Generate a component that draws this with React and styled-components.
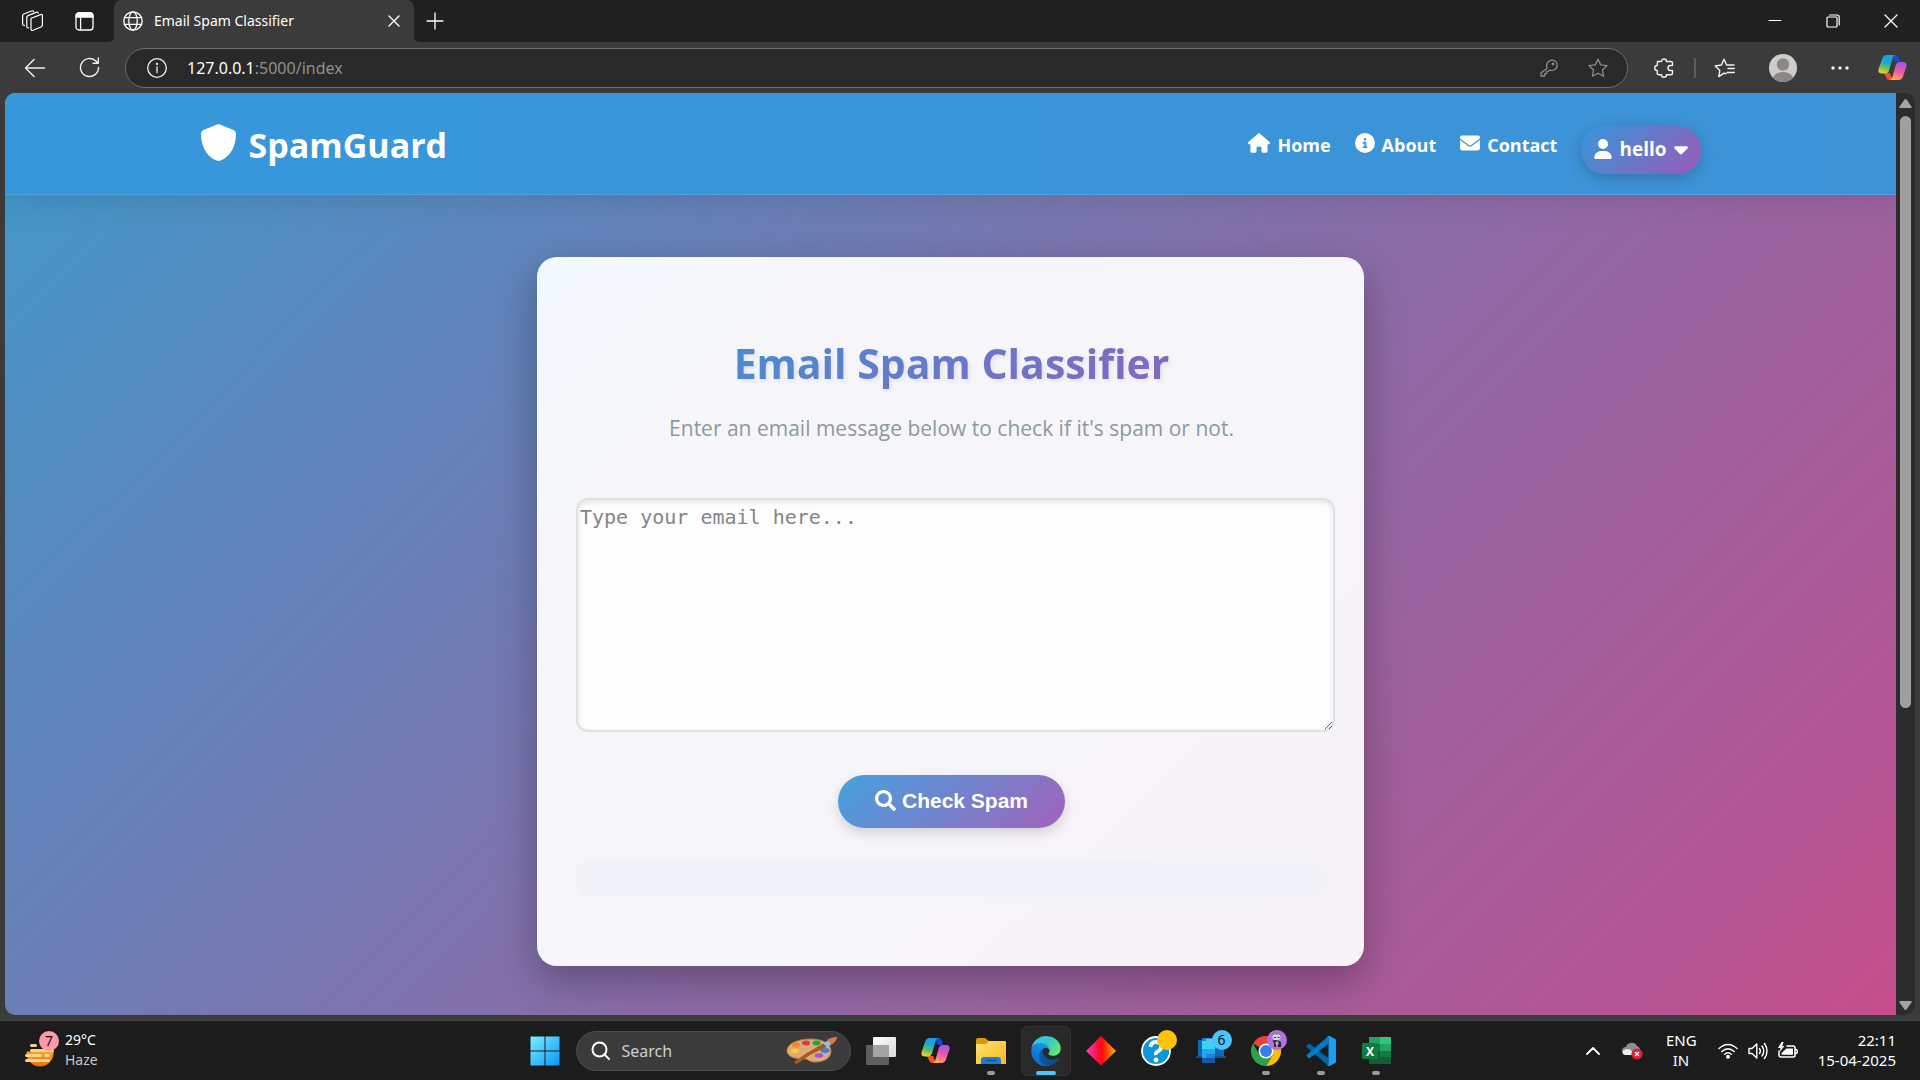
import React from "react";
import styled, { createGlobalStyle } from "styled-components";
import { FaHouse, FaCircleInfo, FaEnvelope, FaUser, FaCaretDown } from "react-icons/fa6";
import { FaSearch } from "react-icons/fa";

const GlobalStyle = createGlobalStyle`
  *, *::before, *::after { box-sizing: border-box; }
  body { margin: 0; background: #3b3b3b; font-family: "Open Sans", "Noto Sans", sans-serif; }
  button { font: inherit; color: inherit; background: none; border: 0; padding: 0; cursor: pointer; }
  svg { display: block; flex: none; }
`;

const ui = `"Noto Sans", "Open Sans", sans-serif`;

const Screen = styled.div`
  display: flex;
  flex-direction: column;
  height: 100vh;
  background: #3b3b3b;
  overflow: hidden;
`;

/* ---------- browser chrome ---------- */

const TabStrip = styled.div`
  display: flex;
  height: 42px;
  flex: none;
  color: #fff;
`;

const StripStart = styled.div`
  display: flex;
  align-items: center;
  gap: 30px;
  width: 114px;
  padding-left: 21px;
  background: #202020;
  border-bottom-right-radius: 5px;
`;

const TabSlot = styled.div`
  width: 300px;
  background: linear-gradient(#202020 50%, #3b3b3b 50%);
`;

const Tab = styled.div`
  display: flex;
  align-items: center;
  height: 100%;
  gap: 11px;
  padding: 0 14px 0 9px;
  border-radius: 8px 8px 0 0;
  background: #3b3b3b;
`;

const TabTitle = styled.span`
  flex: 1;
  font: 14px/20px ${ui};
`;

const StripEnd = styled.div`
  display: flex;
  align-items: center;
  justify-content: space-between;
  flex: 1;
  padding: 0 22px 0 12px;
  background: #202020;
  border-bottom-left-radius: 5px;
`;

const WindowButtons = styled.div`
  display: flex;
  gap: 44px;
`;

const IconButton = styled.button`
  display: flex;
  align-items: center;
  justify-content: center;
`;

const Toolbar = styled.div`
  display: flex;
  align-items: center;
  height: 51px;
  flex: none;
  padding: 0 13px 0 24px;
  color: #f0f0f0;
`;

const NavButtons = styled.div`
  display: flex;
  gap: 34px;
  width: 101px;
`;

const AddressBar = styled.div`
  display: flex;
  align-items: center;
  flex: 1;
  height: 40px;
  padding: 0 19px 0 21px;
  border: 1px solid #6a6a6a;
  border-radius: 20px;
  background: #292929;
`;

const Address = styled.div`
  flex: 1;
  padding-left: 20px;
  font: 16px/24px ${ui};
  color: #8f8f8f;
  b { font-weight: 400; color: #fff; }
`;

const AddressActions = styled.div`
  display: flex;
  align-items: center;
  gap: 30px;
  color: #8c8c8c;
`;

const ToolActions = styled.div`
  display: flex;
  align-items: center;
  padding-left: 26px;
`;

const ToolButton = styled(IconButton)`
  margin-left: ${(p) => p.$gap || 0}px;
`;

const Divider = styled.span`
  width: 2px;
  height: 20px;
  margin-left: 20px;
  background: #5c5c5c;
`;

/* ---------- web page ---------- */

const Viewport = styled.div`
  display: flex;
  flex: 1;
  min-height: 0;
  margin: 0 5px 5px;
  border-radius: 10px;
  overflow: hidden;
  background: #2c2c2c;
`;

const Page = styled.div`
  flex: 1;
  overflow: hidden;
  background: linear-gradient(135deg, #4099cb 0%, #6780b8 30%, #8a6da8 54%, #a15f9c 74%, #b65593 91%, #c64f8a 100%);
`;

const Scrollbar = styled.div`
  display: flex;
  flex-direction: column;
  align-items: center;
  width: 19px;
  padding: 6px 0 5px;
`;

const ScrollTrack = styled.div`
  flex: 1;
  width: 11px;
  margin: 8px 0;
`;

const ScrollThumb = styled.div`
  height: calc(100% * 27 / 40);
  border-radius: 6px;
  background: #9f9f9f;
`;

const Header = styled.header`
  height: 102px;
  border-bottom: 1px solid #519fdb;
  background: linear-gradient(90deg, #3797db, #3e93d7);
  box-shadow: 0 4px 30px rgba(0, 0, 0, 0.12);
`;

const HeaderInner = styled.div`
  display: flex;
  align-items: center;
  justify-content: space-between;
  max-width: 1500px;
  height: 100%;
  margin: 0 auto;
  padding-top: 2px;
  color: #fff;
`;

const Brand = styled.a`
  display: flex;
  align-items: center;
  gap: 13px;
  color: #fff;
  text-decoration: none;
  font-size: 34px;
  line-height: 48px;
  font-weight: 700;
  svg { margin-bottom: 4px; }
`;

const Nav = styled.nav`
  display: flex;
  align-items: center;
  gap: 24px;
`;

const NavLink = styled.a`
  display: flex;
  align-items: center;
  gap: 7px;
  color: #fff;
  text-decoration: none;
  font: 700 18px/28px "Open Sans", sans-serif;
  svg { margin-bottom: 4px; }
`;

const UserMenu = styled.button`
  display: flex;
  align-items: center;
  gap: 7px;
  height: 48px;
  margin-top: 10px;
  padding: 0 13px 2px;
  border-radius: 24px;
  background: linear-gradient(135deg, #3498db, #9b59b6);
  box-shadow: 0 4px 15px rgba(0, 0, 0, 0.2);
  font: 700 19px/28px "Open Sans", sans-serif;
  svg:first-child { width: 18px; }
  svg:last-child { width: 14px; }
`;

const Main = styled.main`
  padding-top: 62px;
`;

const Card = styled.section`
  display: flex;
  flex-direction: column;
  align-items: center;
  width: 827px;
  max-width: 100%;
  margin: 0 auto;
  padding: 76px 37px 69px 39px;
  border-radius: 20px;
  background: linear-gradient(135deg, #f2f8fc, #f5f6fa 18%, #f6f5fa 65%, #f7f2f7);
  box-shadow: 0 15px 40px rgba(0, 0, 0, 0.3);
`;

const Title = styled.h1`
  width: 100%;
  margin: 0;
  text-align: center;
  font-size: 41px;
  line-height: 60px;
  font-weight: 700;
  color: transparent;
  background: linear-gradient(135deg, #3498db, #9b59b6);
  -webkit-background-clip: text;
  background-clip: text;
  filter: drop-shadow(2px 2px 2px rgba(0, 0, 0, 0.08));
`;

const Lead = styled.p`
  margin: 19px 0 54px;
  font-size: 21px;
  line-height: 32px;
  color: #8d9a9b;
`;

const Form = styled.form`
  display: flex;
  flex-direction: column;
  align-items: center;
  width: 100%;
`;

const Message = styled.textarea`
  box-sizing: content-box;
  align-self: flex-start;
  width: 100%;
  height: 226px;
  padding: 2px;
  border: 2px solid #e0e0e0;
  border-radius: 12px;
  outline: none;
  resize: both;
  background: #fdfdfd;
  box-shadow: inset 0 2px 5px rgba(0, 0, 0, 0.1);
  font: 20px/30px "DejaVu Sans Mono", monospace;
  color: #333;
  &::placeholder { color: #858585; }
`;

const Submit = styled.button`
  display: flex;
  align-items: center;
  justify-content: center;
  gap: 6px;
  height: 53px;
  margin: 43px 0 31px;
  padding: 0 37px 2px;
  border-radius: 27px;
  color: #fff;
  background: linear-gradient(135deg, #45a1de, #a163bb);
  box-shadow: 0 5px 12px rgba(0, 0, 0, 0.15);
  font: 700 21px/24px "Liberation Sans", sans-serif;
`;

const Result = styled.div`
  width: 100%;
  height: 38px;
  border-radius: 12px;
  background: #f2f3f8;
`;

/* ---------- taskbar ---------- */

const Taskbar = styled.footer`
  display: grid;
  grid-template-columns: 1fr auto 1fr;
  align-items: center;
  height: 60px;
  flex: none;
  border-top: 1px solid #454545;
  background: #1c1c1c;
  color: #fff;
  font: 14px/20px ${ui};
`;

const Weather = styled.button`
  display: flex;
  align-items: center;
  gap: 4px;
  padding: 0 0 2px 25px;
  text-align: left;
  small { display: block; font-size: 14px; color: #c8c8c8; }
`;

const Apps = styled.div`
  display: flex;
  align-items: center;
  gap: 5px;
`;

const AppButton = styled.button`
  display: flex;
  flex-direction: column;
  align-items: center;
  justify-content: center;
  position: relative;
  width: 50px;
  height: 50px;
  border-radius: 6px;
  border: 1px solid ${(p) => (p.$active ? "#333" : "transparent")};
  background: ${(p) => (p.$active ? "#292929" : "transparent")};
  &::after {
    content: "";
    position: absolute;
    bottom: 0;
    width: ${(p) => (p.$active ? 20 : 8)}px;
    height: 4px;
    border-radius: 2px;
    background: ${(p) => (p.$active ? "#4cc2ff" : p.$running ? "#9a9a9a" : "transparent")};
  }
`;

const Badge = styled.span`
  position: absolute;
  top: 3px;
  right: 3px;
  width: 20px;
  height: 20px;
  border-radius: 50%;
  background: ${(p) => p.$color};
  color: #111;
  font: 14px/20px ${ui};
  text-align: center;
`;

const WeatherArt = styled.span`
  position: relative;
  width: 36px;
  height: 38px;
  ${Badge} { top: 0; right: 2px; }
`;

const SearchBox = styled.label`
  display: flex;
  align-items: center;
  width: 275px;
  height: 40px;
  margin-left: 1px;
  padding: 0 12px 0 14px;
  border: 1px solid #4c4c4c;
  border-radius: 20px;
  background: #3b3b3b;
`;

const SearchInput = styled.input`
  flex: 1;
  min-width: 0;
  padding: 0 0 0 12px;
  border: 0;
  outline: 0;
  background: none;
  color: #fff;
  font: 16px/24px ${ui};
  &::placeholder { color: #cfcfcf; opacity: 1; }
`;

const Tray = styled.div`
  display: flex;
  align-items: center;
  justify-content: flex-end;
  padding-right: 24px;
  font-size: 15px;
`;

const Language = styled.button`
  width: 30px;
  margin: 0 22px 0 23px;
  padding-bottom: 2px;
  text-align: center;
`;

const Status = styled.button`
  display: flex;
  align-items: center;
  gap: 10px;
`;

const Clock = styled.button`
  width: 98px;
  padding-bottom: 2px;
  text-align: right;
  white-space: nowrap;
`;

const CloudButton = styled(IconButton)`
  margin-left: 22px;
`;

/* ---------- drawings ---------- */

const Line = ({ w = 20, h = w, box, sw = 1.3, children }) => (
  <svg width={w} height={h} viewBox={box || `0 0 ${w} ${h}`} fill="none" stroke="currentColor" strokeWidth={sw} strokeLinecap="round" strokeLinejoin="round" aria-hidden="true">
    {children}
  </svg>
);

const Workspaces = () => (
  <Line w={24} h={22} sw={1.2}>
    <path d="M10.200 8.200 19.600 4.600Q21.400 4 21.400 5.800V15Q21.400 16.400 20 17L12 20.300Q10 21 10 19V9.600Q10 8.600 10.200 8.200Z" />
    <path d="M7.600 17.800Q5.800 18.200 5.800 16.400V7.400Q5.800 6.200 7 5.600L15 2.400Q17 1.800 17.200 3.200" />
    <path d="M3.400 15.400Q1.600 15.600 1.600 13.800V5.800Q1.600 4.600 2.800 4L10.400 1Q12.200.4 12.600 1.600" />
  </Line>
);

const TabActions = () => (
  <Line w={19} h={19} sw={1.3}>
    <rect x="1" y="1" width="17" height="17" rx="3" />
    <path d="M1 4a3 3 0 0 1 3-3h11a3 3 0 0 1 3 3v1H1z" fill="currentColor" />
    <path d="M5.600 6v12" />
  </Line>
);

const Globe = () => (
  <Line w={20}>
    <circle cx="10" cy="10" r="9.200" />
    <ellipse cx="10" cy="10" rx="4.200" ry="9.200" />
    <path d="M1.400 6.600h17.200M1.400 13.400h17.200" />
  </Line>
);

const Copilot = ({ id }) => (
  <svg width="29" height="27" viewBox="0 0 29 27" aria-hidden="true">
    <defs>
      <linearGradient id={`${id}a`} x1="0.6" y1="0" x2="0.3" y2="1">
        <stop offset="0" stopColor="#12a0ee" />
        <stop offset="0.4" stopColor="#27a5c8" />
        <stop offset="0.7" stopColor="#68c25c" />
        <stop offset="1" stopColor="#f4d322" />
      </linearGradient>
      <linearGradient id={`${id}b`} x1="0.6" y1="0" x2="0.3" y2="1">
        <stop offset="0" stopColor="#a454f0" />
        <stop offset="0.5" stopColor="#ef5a9c" />
        <stop offset="1" stopColor="#ffad55" />
      </linearGradient>
    </defs>
    <path d="M14 1h3.500Q20 1 20.800 3.600L22 8H17z" fill="#1748d0" />
    <path d="M6 19h6l3 7h-3.500Q9 26 8.200 23.400Z" fill="#f4512c" />
    <path d="M9 1h9Q15.400 1 14.600 4L11 16.500Q10 19.500 7 19.500H4Q-.5 19.500.6 15L4.200 4.500Q5.300 1 9 1Z" fill={`url(#${id}a)`} />
    <path d="M20 26h-9Q13.600 26 14.400 23L17.800 11Q18.800 8 22 8h3Q29.500 8 28.400 12.500L25 22.500Q23.800 26 20 26Z" fill={`url(#${id}b)`} />
  </svg>
);

const Avatar = () => (
  <svg width="28" height="28" viewBox="0 0 28 28" aria-hidden="true">
    <clipPath id="avatar"><circle cx="14" cy="14" r="14" /></clipPath>
    <g clipPath="url(#avatar)">
      <rect width="28" height="28" fill="#cfcdca" />
      <circle cx="14" cy="10.500" r="6.200" fill="#8c8784" />
      <ellipse cx="14" cy="26" rx="10.500" ry="8" fill="#8c8784" />
    </g>
  </svg>
);

const star = "M10 1.200 12.700 6.900 19 7.700 14.400 12 15.600 18.300 10 15.200 4.400 18.300 5.600 12 1 7.700 7.300 6.900Z";

const Palette = () => (
  <svg width="52" height="28" viewBox="0 0 52 28" aria-hidden="true">
    <path d="M1 14C1 6 13 2 25 2s20 5 20 12-7 11-16 11c-5 0-6-2-9-3-4-1-6 1-11-1-5-1-8-4-8-7Z" fill="#deaa78" stroke="#b97c48" />
    <ellipse cx="10" cy="8" rx="4" ry="2.400" fill="#ee8b22" />
    <ellipse cx="20" cy="6" rx="4" ry="2.400" fill="#e03b3b" />
    <ellipse cx="30.500" cy="6" rx="4" ry="2.400" fill="#20a53c" />
    <ellipse cx="9" cy="14" rx="4" ry="2.200" fill="#f8cb3a" />
    <ellipse cx="39" cy="13.500" rx="4.500" ry="2.400" fill="#3284d6" />
    <ellipse cx="33" cy="18.500" rx="4.200" ry="2.200" fill="#a84fe0" />
    <path d="m8 25 12-8.500L38 6l3.500 3.500L24 18 10 27.500Z" fill="#a85a20" />
    <path d="m37 6.500 5-3 3.500 3.500-4 3.500Z" fill="#8fc4e8" />
    <path d="M41 3Q45 0 51.500 0 49 6 45.500 7.500Z" fill="#e8793a" />
  </svg>
);

const WindowsLogo = () => (
  <svg width="30" height="30" viewBox="0 0 30 30" aria-hidden="true">
    <linearGradient id="win" x1="0" y1="0" x2="1" y2="1">
      <stop offset="0" stopColor="#7af0ff" /><stop offset="1" stopColor="#0a94fa" />
    </linearGradient>
    <path d="M.5.5h14v14H.5zM15.500.5h14v14h-14zM.5 15.500h14v14H.5zM15.500 15.500h14v14h-14z" fill="url(#win)" />
  </svg>
);

const TaskView = () => (
  <svg width="30" height="30" viewBox="0 0 30 30" aria-hidden="true">
    <linearGradient id="tv" x1="0" y1="0" x2="1" y2="1"><stop offset="0" stopColor="#fff" /><stop offset="1" stopColor="#d8d8d8" /></linearGradient>
    <rect x="7" y="1" width="23" height="20" rx="1" fill="url(#tv)" />
    <rect x="0" y="9" width="23" height="20" rx="1" fill="#6b6b6b" fillOpacity="0.85" />
    <path d="M7 9h16v12H7z" fill="#a4a4a4" />
  </svg>
);

const Folder = () => (
  <svg width="30" height="30" viewBox="0 0 30 30" aria-hidden="true">
    <linearGradient id="fol" x1="0" y1="0" x2="1" y2="1"><stop offset="0" stopColor="#ffe07a" /><stop offset="1" stopColor="#f9b916" /></linearGradient>
    <path d="M0 4q0-2 2-2h7l4 3h15q1 0 1 2v6H0z" fill="#d99c00" />
    <path d="M0 8h10l3-3h16q1 0 1 1v22H0z" fill="url(#fol)" />
    <path d="M5 28v-4q0-3 3-3h14q3 0 3 3v4z" fill="#1a80d4" />
    <path d="M10 24.500h10" stroke="#0b559c" strokeWidth="1.500" />
  </svg>
);

const Edge = () => (
  <svg width="30" height="30" viewBox="0 0 257 260" aria-hidden="true">
    <defs>
      <linearGradient id="e1" x1="0" y1="0" x2="1" y2="0"><stop offset="0" stopColor="#0c59a4" /><stop offset="1" stopColor="#124a8c" /></linearGradient>
      <linearGradient id="e2" x1="0.800" y1="0" x2="0.300" y2="1"><stop offset="0" stopColor="#1b9de2" /><stop offset="0.500" stopColor="#1280dc" /><stop offset="1" stopColor="#0669bd" /></linearGradient>
      <linearGradient id="e3" x1="0" y1="0.300" x2="1" y2="0.700"><stop offset="0" stopColor="#35c1f1" /><stop offset="0.500" stopColor="#34c7c7" /><stop offset="1" stopColor="#66eb6e" /></linearGradient>
    </defs>
    <path fill="url(#e1)" d="M235.700 195.500a94 94 0 0 1-10.500 4.700 102 102 0 0 1-36 6.400c-47.300 0-88.500-32.500-88.500-74.300a31.500 31.500 0 0 1 16.400-27.300c-42.800 1.800-53.800 46.400-53.800 72.500 0 73.900 68.100 81.400 82.800 81.400 7.900 0 19.800-2.300 27-4.600l1.300-.4a128 128 0 0 0 66.600-52.800 4 4 0 0 0-5.300-5.600z" />
    <path fill="url(#e2)" d="M105.700 246.400A79 79 0 0 1 83 225a80.700 80.700 0 0 1 29.500-120c3.200-1.400 8.500-4 15.600-4a32.400 32.400 0 0 1 25.600 13 31.900 31.900 0 0 1 6.400 18.700c0-.2 24.500-79.600-80-79.600-43.900 0-80 41.600-80 78.200a130 130 0 0 0 12 56 128 128 0 0 0 156.400 67 75.500 75.500 0 0 1-62.800-8z" />
    <path fill="url(#e3)" d="M152.300 148.900c-.8 1-3.300 2.500-3.300 5.600 0 2.600 1.700 5.100 4.700 7.300 14.400 10 41.500 8.600 41.600 8.600a59.600 59.600 0 0 0 30.300-8.300 61.400 61.400 0 0 0 30.400-52.900c.3-22.400-8-37.300-11.300-43.900C223.500 23.800 177.700 0 128 0A128 128 0 0 0 0 126.200c.5-36.500 36.800-66 80-66 3.500 0 23.500.3 42 10a72 72 0 0 1 30.900 29.200c6.100 10.700 7.200 24.200 7.200 29.500s-2.700 13.300-7.800 20z" />
  </svg>
);

const Diamond = () => (
  <svg width="30" height="30" viewBox="0 0 30 30" aria-hidden="true">
    <linearGradient id="dia"><stop offset="0" stopColor="#ff3bc2" /><stop offset="0.400" stopColor="#f8103c" /><stop offset="0.550" stopColor="#ff0a0a" /><stop offset="1" stopColor="#ffb800" /></linearGradient>
    <path d="M15 0 30 15 15 29.500 0 15z" fill="url(#dia)" />
  </svg>
);

const Help = () => (
  <svg width="30" height="30" viewBox="0 0 30 30" aria-hidden="true">
    <circle cx="15" cy="15" r="14" fill="#0a97d9" stroke="#fff" strokeWidth="1.800" />
    <path d="M9.500 11q.5-5 5.500-5t5.300 4.500q0 3-3 4.700T15 19" fill="none" stroke="#fff" strokeWidth="3.800" />
    <circle cx="15" cy="24" r="2.400" fill="#fff" />
  </svg>
);

const PhoneLink = () => (
  <svg width="30" height="30" viewBox="0 0 30 30" aria-hidden="true">
    <path d="M2 4h26v17H2z" fill="#1267b4" />
    <path d="M0 20h30v2H0z" fill="#1b4f86" />
    <path d="M6 2h13v25H6z" fill="#1a86d8" />
    <path d="M6 5h13v8H6z" fill="#37d5f5" />
    <path d="M6 13h4v14H6zM10 13h9v5h-9z" fill="#23a7e8" />
    <path d="M6 22h13v5H6z" fill="#1558a8" />
    <path d="M10 4h7" stroke="#bff4ff" />
  </svg>
);

const Chrome = () => (
  <svg width="30" height="30" viewBox="0 0 30 30" aria-hidden="true">
    <path d="M15 15 2 7.500A15 15 0 0 1 28 7.500H15z" fill="#ea4335" />
    <path d="M15 15V7.500h13A15 15 0 0 1 15 30l6.500-11.200z" fill="#fbbc04" />
    <path d="M2 7.500A15 15 0 0 0 15 30l6.500-11.200-6.500 3-6.500-3z" fill="#2da14c" />
    <circle cx="15" cy="15" r="7.500" fill="#fff" />
    <circle cx="15" cy="15" r="6" fill="#3b7ded" />
  </svg>
);

const VsCode = () => (
  <svg width="30" height="30" viewBox="0 0 100 100" aria-hidden="true">
    <path d="M2 33 8 27q2-2 5 0l62 47v25q-3 0-5-3L2 37q-2-2 0-4z" fill="#0065a9" />
    <path d="M2 67q-2-2 0-4L70 4q2-3 5-3v25L13 73q-3 2-5 0z" fill="#007acc" />
    <path d="M70 97q5 5 9 3l19-10q2-1 2-4V14q0-3-2-4L79 0q-4-2-9 3 5-2 5 4v86q0 6-5 4z" fill="#1f9cf0" />
  </svg>
);

const Excel = () => (
  <svg width="30" height="30" viewBox="0 0 30 30" aria-hidden="true">
    <path d="M8 1h11v7H8z" fill="#21a366" />
    <path d="M19 1h11v7H19z" fill="#33c481" />
    <path d="M8 8h11v7H8z" fill="#107c41" />
    <path d="M19 8h11v7H19z" fill="#21a366" />
    <path d="M8 15h22v13H8z" fill="#185c37" />
    <path d="M19 15h11v6H19z" fill="#107c41" />
    <rect x="1" y="7" width="16" height="16" rx="1" fill="#107c41" />
    <text x="9" y="19.500" textAnchor="middle" fill="#fff" fontFamily="Open Sans, sans-serif" fontWeight="700" fontSize="12">X</text>
  </svg>
);

const Profile = () => (
  <svg width="20" height="20" viewBox="0 0 20 20" aria-hidden="true">
    <circle cx="9.500" cy="6.500" r="4" fill="#d8d4d8" />
    <path d="M5 6q0-4 4.500-4T14 6l-2-1.500H7z" fill="#8d848f" />
    <path d="M7 7h2v1H7zM10.500 7h2v1h-2z" fill="#333" />
    <path d="M5.500 10.500Q9.500 9 14 12v5h-3v-4l-2 1v3H7v-4z" fill="#2b2530" />
    <path d="M8.500 11.500h3v3h-3z" fill="#b9b0bd" />
  </svg>
);

const Haze = () => (
  <svg width="30" height="38" viewBox="0 0 30 38" aria-hidden="true">
    <linearGradient id="sun" x1="0" y1="0" x2="0" y2="1"><stop offset="0" stopColor="#ffcf3a" /><stop offset="1" stopColor="#ee6c12" /></linearGradient>
    <circle cx="15" cy="22" r="13.500" fill="url(#sun)" />
    <path d="M0 7h30v13.500H0z" fill="#1c1c1c" />
    <path d="M18 20q0-5 10-2l.5 4H18z" fill="#f2ab27" />
    <path d="M6.500 14.500h4M6.500 19.500h21M1.500 24.500h14M20.500 24.500h3M1.500 29.500h22" stroke="#f0d48c" strokeWidth="3" strokeLinecap="round" />
  </svg>
);

const Cloud = () => (
  <svg width="21" height="18" viewBox="0 0 21 18" aria-hidden="true">
    <path d="M4 13a4 4 0 0 1 0-8 6 6 0 0 1 11-1q3 1 3 4v5z" fill="#8f8f8f" />
    <path d="M3 13q-3-1-2-4 4-4 9 0v4z" fill="#eee" />
    <circle cx="15" cy="12" r="5.600" fill="#d9232e" />
    <path d="m13 10 4 4m0-4-4 4" stroke="#fff" strokeWidth="1.400" />
  </svg>
);

const Triangle = ({ down }) => (
  <svg width="13" height="9" viewBox="0 0 13 9" aria-hidden="true">
    <path d={down ? "M1.500 0h10q1.500 0 1 1.500L7.500 8.500q-1 1-2 0L.5 1.500Q0 0 1.500 0Z" : "M1.500 9h10q1.500 0 1-1.500L7.500.5q-1-1-2 0L.5 7.500Q0 9 1.500 9Z"} fill="#a3a3a3" />
  </svg>
);

const apps = [
  { name: "Task View", icon: <TaskView /> },
  { name: "Copilot", icon: <Copilot id="tc" /> },
  { name: "File Explorer", icon: <Folder />, running: true },
  { name: "Microsoft Edge", icon: <Edge />, active: true },
  { name: "Diamond", icon: <Diamond /> },
  { name: "Help", icon: <Help />, badge: "#ffc20e" },
  { name: "Phone Link", icon: <PhoneLink />, badge: "#4cc2ff", count: "6" },
  { name: "Chrome", icon: <Chrome />, running: true, badge: "#b56fe0", count: <Profile /> },
  { name: "Visual Studio Code", icon: <VsCode />, running: true },
  { name: "Excel", icon: <Excel />, running: true },
];

function BrowserTop() {
  return (
    <>
      <TabStrip>
        <StripStart>
          <IconButton aria-label="Workspaces"><Workspaces /></IconButton>
          <IconButton aria-label="Tab actions"><TabActions /></IconButton>
        </StripStart>
        <TabSlot>
          <Tab>
            <Globe />
            <TabTitle>Email Spam Classifier</TabTitle>
            <IconButton aria-label="Close tab"><Line w={12} sw={1.4}><path d="m1 1 10 10M11 1 1 11" /></Line></IconButton>
          </Tab>
        </TabSlot>
        <StripEnd>
          <IconButton aria-label="New tab"><Line w={18}><path d="M9 1v16M1 9h16" /></Line></IconButton>
          <WindowButtons>
            <IconButton aria-label="Minimize"><Line w={14} sw={1}><path d="M1 6.500h12" /></Line></IconButton>
            <IconButton aria-label="Restore"><Line w={14} sw={1.2}><rect x="1" y="3" width="10" height="10" rx="1" /><path d="M3.500 1H11q2.200 0 2.200 2.200v7.600" /></Line></IconButton>
            <IconButton aria-label="Close"><Line w={14}><path d="m1 1 12 12M13 1 1 13" /></Line></IconButton>
          </WindowButtons>
        </StripEnd>
      </TabStrip>
      <Toolbar>
        <NavButtons>
          <IconButton aria-label="Back"><Line w={21} h={20} sw={1.4}><path d="M10 1.500 1.500 10l8.500 8.500M1.500 10h19" /></Line></IconButton>
          <IconButton aria-label="Refresh"><Line w={21} sw={1.4}><path d="M19.500 10.500a9 9 0 1 1-3-6.700l2.500 2.200M19.300 1v5.300H14" /></Line></IconButton>
        </NavButtons>
        <AddressBar>
          <IconButton aria-label="Site information"><Line w={20}><circle cx="10" cy="10" r="9.300" /><path d="M10 9v5.500" /><circle cx="10" cy="6" r="0.500" /></Line></IconButton>
          <Address><b>127.0.0.1</b>:5000/index</Address>
          <AddressActions>
            <IconButton aria-label="Passwords"><Line w={18}><path d="M7 9.500Q5.500 4 9.500 1.800 14-.2 16.500 3.500 18.500 8.500 14 11q-2 .8-4.500.2L8 12.700H6.500v2H4.700V17H1v-3z" /><circle cx="13" cy="5" r="0.800" /></Line></IconButton>
            <IconButton aria-label="Favorite"><Line w={20}><path d={star} /></Line></IconButton>
          </AddressActions>
        </AddressBar>
        <ToolActions>
          <ToolButton aria-label="Extensions"><Line w={20} sw={1.4}><path d="M3.500 3.500h4a2.500 2.500 0 0 1 5 0H17q1.500 0 1.500 1.500v2.500h-2a2.300 2.300 0 0 0 0 5h2V15q0 1.800-1.500 1.800h-4.500a2.500 2.500 0 0 1-5 0H5q-1.800 0-1.800-1.800v-2.500a2.500 2.500 0 0 1 0-5z" /></Line></ToolButton>
          <Divider />
          <ToolButton $gap={18} aria-label="Favorites"><Line w={21} h={20} sw={1.4}><path d="M12 15.600 10 15.200 4.800 18.600 5.800 12.400 1.200 8 7.400 7 10 1.200 12.700 7H20M14 10.500h6.500M13 14.500h7.500" /></Line></ToolButton>
          <ToolButton $gap={34} aria-label="Profile"><Avatar /></ToolButton>
          <ToolButton $gap={34} aria-label="More"><svg width="18" height="4" viewBox="0 0 18 4" fill="currentColor" aria-hidden="true"><circle cx="2" cy="2" r="1.700" /><circle cx="9" cy="2" r="1.700" /><circle cx="16" cy="2" r="1.700" /></svg></ToolButton>
          <ToolButton $gap={29} aria-label="Copilot"><Copilot id="bc" /></ToolButton>
        </ToolActions>
      </Toolbar>
    </>
  );
}

function SpamPage() {
  return (
    <Page>
      <Header>
        <HeaderInner>
          <Brand href="#home">
            <svg width="35" height="37" viewBox="0 0 35 37" fill="#fff" aria-hidden="true">
              <path d="M16.200.4q1.300-.5 2.600 0L32.500 6Q35 7 35 9.500C35 22 30 32 19.500 36.600q-2 .8-4 0C5 32 0 22 0 9.500Q0 7 2.500 6Z" />
            </svg>
            SpamGuard
          </Brand>
          <Nav>
            <NavLink href="#home"><FaHouse size={22} />Home</NavLink>
            <NavLink href="#about"><FaCircleInfo size={20} />About</NavLink>
            <NavLink href="#contact"><FaEnvelope size={20} />Contact</NavLink>
            <UserMenu type="button"><FaUser size={20} />hello<FaCaretDown size={22} /></UserMenu>
          </Nav>
        </HeaderInner>
      </Header>
      <Main>
        <Card>
          <Title>Email Spam Classifier</Title>
          <Lead>Enter an email message below to check if it's spam or not.</Lead>
          <Form onSubmit={(e) => e.preventDefault()}>
            <Message aria-label="Email message" placeholder="Type your email here..." />
            <Submit type="submit"><FaSearch size={21} />Check Spam</Submit>
          </Form>
          <Result role="status" />
        </Card>
      </Main>
    </Page>
  );
}

export default function App() {
  return (
    <Screen>
      <GlobalStyle />
      <BrowserTop />
      <Viewport>
        <SpamPage />
        <Scrollbar>
          <Triangle />
          <ScrollTrack><ScrollThumb /></ScrollTrack>
          <Triangle down />
        </Scrollbar>
      </Viewport>
      <Taskbar>
        <Weather>
          <WeatherArt><Haze /><Badge $color="#ff99a4">7</Badge></WeatherArt>
          <span>29°C<small>Haze</small></span>
        </Weather>
        <Apps>
          <AppButton aria-label="Start"><WindowsLogo /></AppButton>
          <SearchBox>
            <Line w={19} sw={2}><circle cx="8.500" cy="8.500" r="7" /><path d="m13.500 13.500 4.500 4.500" /></Line>
            <SearchInput aria-label="Search" placeholder="Search" />
            <Palette />
          </SearchBox>
          {apps.map((a) => (
            <AppButton key={a.name} aria-label={a.name} $active={a.active} $running={a.running}>
              {a.icon}
              {a.badge && <Badge $color={a.badge}>{a.count}</Badge>}
            </AppButton>
          ))}
        </Apps>
        <Tray>
          <IconButton aria-label="Hidden icons"><Line w={14} h={8} sw={1.8}><path d="m1 7 6-6 6 6" /></Line></IconButton>
          <CloudButton aria-label="OneDrive"><Cloud /></CloudButton>
          <Language>ENG<br />IN</Language>
          <Status aria-label="Network, sound and battery">
            <Line w={20} h={16} sw={1.5}><path d="M1 5.500q9-8 18 0M3.800 8.500q6.200-5.500 12.400 0M6.700 11.300q3.300-3 6.600 0" /><circle cx="10" cy="13.800" r="1.200" fill="currentColor" /></Line>
            <Line w={20} h={18} sw={1.4}><path d="M1 6.500h3L8.800 2v14L4 11.500H1zM11.500 6.500q1.600 2.500 0 5M14 4q3.500 5 0 10M16.500 1.500q5 7.500 0 15" /></Line>
            <Line w={20} h={18} sw={1.5}><path d="M9 4h6q2 0 2 2v7q0 2-2 2H3q-2 0-2-2V9M17.800 7.500q1.500 0 1.500 2t-1.500 2" /><path d="M8.500 6.500H15v6.200H3.500V11Z" fill="currentColor" stroke="none" /><path d="M3.500 0 0 6h2.500L1.500 10 6.500 4H4.200l1.500-4z" fill="currentColor" stroke="none" /></Line>
          </Status>
          <Clock>22:11<br />15-04-2025</Clock>
        </Tray>
      </Taskbar>
    </Screen>
  );
}
